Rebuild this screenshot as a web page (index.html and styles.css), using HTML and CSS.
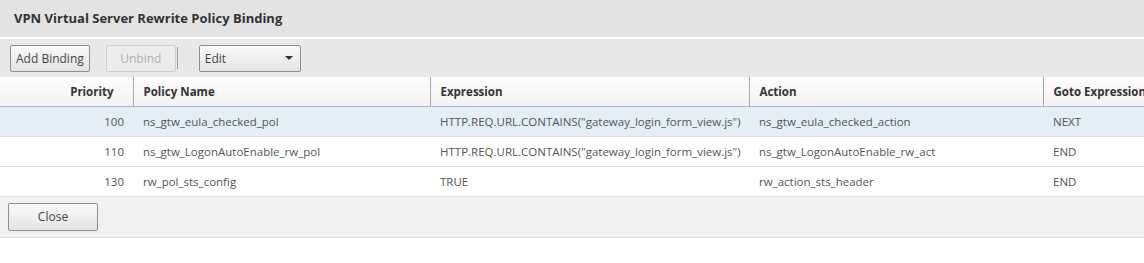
FILE: index.html
```html
<!DOCTYPE html>
<html>
<head>
  <title>VPN Virtual Server Rewrite Policy Binding</title>
  <link rel="stylesheet" href="styles.css">
</head>
<body>
  <div class="dialog">
    <div class="title-bar">VPN Virtual Server Rewrite Policy Binding</div>

    <div class="toolbar">
      <button class="btn">Add Binding</button>
      <button class="btn" disabled>Unbind</button>
      <span class="sep"></span>
      <div class="select">
        <span>Edit</span>
        <span class="caret"></span>
      </div>
    </div>

    <table class="grid">
      <colgroup>
        <col class="col-prio">
        <col class="col-name">
        <col class="col-expr">
        <col class="col-action">
        <col class="col-goto">
      </colgroup>
      <thead>
        <tr>
          <th class="prio">Priority</th>
          <th>Policy Name</th>
          <th>Expression</th>
          <th>Action</th>
          <th>Goto Expression</th>
        </tr>
      </thead>
      <tbody>
        <tr class="selected">
          <td class="num">100</td>
          <td>ns_gtw_eula_checked_pol</td>
          <td>HTTP.REQ.URL.CONTAINS("gateway_login_form_view.js")</td>
          <td>ns_gtw_eula_checked_action</td>
          <td>NEXT</td>
        </tr>
        <tr>
          <td class="num">110</td>
          <td>ns_gtw_LogonAutoEnable_rw_pol</td>
          <td>HTTP.REQ.URL.CONTAINS("gateway_login_form_view.js")</td>
          <td>ns_gtw_LogonAutoEnable_rw_act</td>
          <td>END</td>
        </tr>
        <tr>
          <td class="num">130</td>
          <td>rw_pol_sts_config</td>
          <td>TRUE</td>
          <td>rw_action_sts_header</td>
          <td>END</td>
        </tr>
      </tbody>
    </table>

    <div class="footer">
      <button class="btn btn-close">Close</button>
    </div>
  </div>
</body>
</html>
```

FILE: styles.css
```css
body {
  margin: 0;
  background: #fff;
  font-family: "Open Sans", Arial, sans-serif;
  font-size: 11.5px;
  color: #555;
}
.dialog {
  width: 1144px;
  overflow: hidden;
}
.title-bar {
  height: 37px;
  line-height: 37px;
  padding-left: 14px;
  background: #e3e3e3;
  border-bottom: 2px solid #fff;
  font-size: 13px;
  font-weight: bold;
  color: #333;
}
.toolbar {
  display: flex;
  align-items: center;
  height: 38px;
  padding-left: 10px;
  background: #e8e8e8;
}
.btn {
  height: 27px;
  padding: 0 5px;
  font-family: inherit;
  font-size: 12px;
  color: #444;
  background: linear-gradient(#fafafa, #e4e4e4);
  border: 1px solid #8e8e8e;
  border-radius: 2px;
}
.btn + .btn {
  margin-left: 16px;
}
.btn[disabled] {
  width: 70px;
  color: #b0b0b0;
  background: #ececec;
  border-color: #cdcdcd;
}
.sep {
  width: 1px;
  height: 22px;
  margin: 0 21px 0 1px;
  background: #999;
}
.select {
  display: flex;
  align-items: center;
  justify-content: space-between;
  padding: 0 7px 0 5px;
  box-sizing: border-box;
  width: 102px;
  height: 27px;
  background: linear-gradient(#fafafa, #e4e4e4);
  border: 1px solid #8e8e8e;
  border-radius: 2px;
  font-size: 12px;
  color: #444;
}
.caret {
  width: 0;
  height: 0;
  border-left: 4px solid transparent;
  border-right: 4px solid transparent;
  border-top: 4px solid #333;
}
.grid {
  width: 1160px;
  border-collapse: collapse;
  table-layout: fixed;
}
.col-prio { width: 133px; }
.col-name { width: 297px; }
.col-expr { width: 319px; }
.col-action { width: 294px; }
.col-goto { width: 117px; }
.grid th,
.grid td {
  box-sizing: border-box;
  height: 30px;
  padding: 0 10px;
  white-space: nowrap;
  overflow: visible;
}
.grid th {
  height: 29px;
  text-align: left;
  font-weight: bold;
  color: #333;
  background: linear-gradient(#fdfdfd, #f2f2f2);
  border-bottom: 1px solid #b9b9b9;
  border-left: 1px solid #aaa;
}
.grid th.prio {
  border-left: none;
  text-align: right;
  padding-right: 19px;
}
.grid td {
  border-bottom: 1px solid #e0e0e0;
}
.grid td.num {
  text-align: right;
  padding-right: 9px;
}
.grid tr.selected td {
  background: #e4eef6;
}
.footer {
  height: 40px;
  display: flex;
  align-items: center;
  padding-left: 8px;
  background: #f1f1f1;
  border-bottom: 1px solid #e0e0e0;
}
.btn-close {
  width: 90px;
  height: 28px;
}
```
